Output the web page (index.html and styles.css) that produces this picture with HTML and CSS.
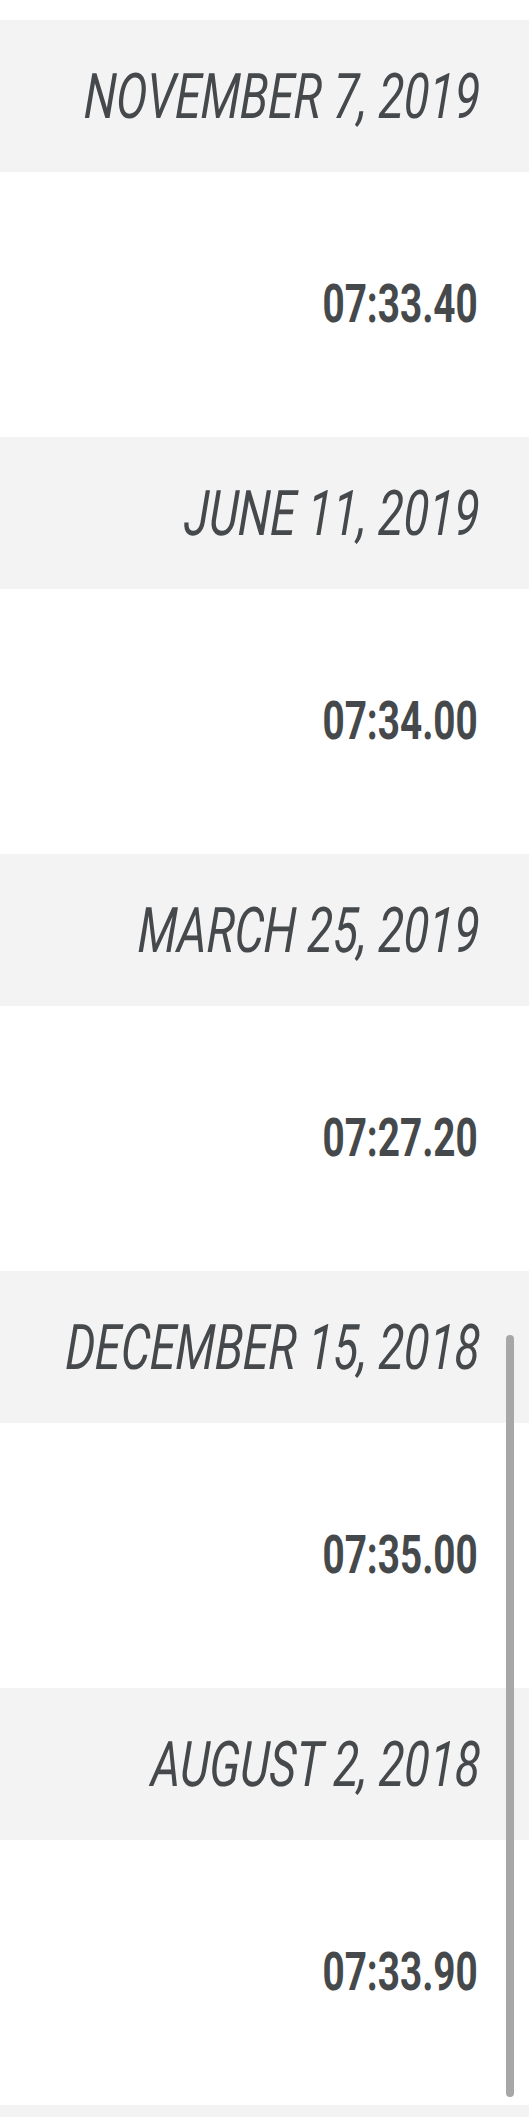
FILE: index.html
```html
<!DOCTYPE html>
<html lang="en">
<head>
<meta charset="utf-8">
<title>Results</title>
<link rel="stylesheet" href="styles.css">
</head>
<body>
<main class="list">
  <section class="entry">
    <div class="date"><span class="date-text">NOVEMBER 7, 2019</span></div>
    <div class="time"><span class="time-text">07:33.40</span></div>
  </section>
  <section class="entry">
    <div class="date"><span class="date-text">JUNE 11, 2019</span></div>
    <div class="time"><span class="time-text">07:34.00</span></div>
  </section>
  <section class="entry">
    <div class="date"><span class="date-text">MARCH 25, 2019</span></div>
    <div class="time"><span class="time-text">07:27.20</span></div>
  </section>
  <section class="entry">
    <div class="date"><span class="date-text">DECEMBER 15, 2018</span></div>
    <div class="time"><span class="time-text">07:35.00</span></div>
  </section>
  <section class="entry">
    <div class="date"><span class="date-text">AUGUST 2, 2018</span></div>
    <div class="time"><span class="time-text">07:33.90</span></div>
  </section>
  <div class="band-end"></div>
</main>
<div class="scrollbar"></div>
</body>
</html>
```
FILE: styles.css
```css
html, body {
  margin: 0;
  padding: 0;
  background: #ffffff;
}
body {
  height: 2117px;
  overflow: hidden;
  position: relative;
  font-family: Roboto, "Liberation Sans", sans-serif;
  color: #45494c;
}
.list {
  padding-top: 20px;
}
.entry {
  display: flex;
  flex-direction: column;
}
.date {
  height: 152px;
  background: #f3f3f3;
  display: flex;
  align-items: center;
  justify-content: flex-end;
  padding-right: 49px;
}
.time {
  height: 265px;
  background: #ffffff;
  display: flex;
  align-items: center;
  justify-content: flex-end;
  padding-right: 51px;
}
.band-end {
  height: 12px;
  background: #f3f3f3;
}
.date-text {
  display: inline-block;
  font-size: 63px;
  font-style: italic;
  font-weight: 400;
  line-height: 1;
  white-space: nowrap;
  transform-origin: right center;
  transform: scaleX(0.737) skewX(-3deg);
}
.time-text {
  display: inline-block;
  font-size: 53px;
  font-weight: 700;
  line-height: 1;
  white-space: nowrap;
  transform-origin: right center;
  transform: scaleX(0.73);
}
.scrollbar {
  position: absolute;
  left: 506px;
  top: 1335px;
  width: 8px;
  height: 762px;
  border-radius: 4px;
  background: #a7a7a7;
}
```
